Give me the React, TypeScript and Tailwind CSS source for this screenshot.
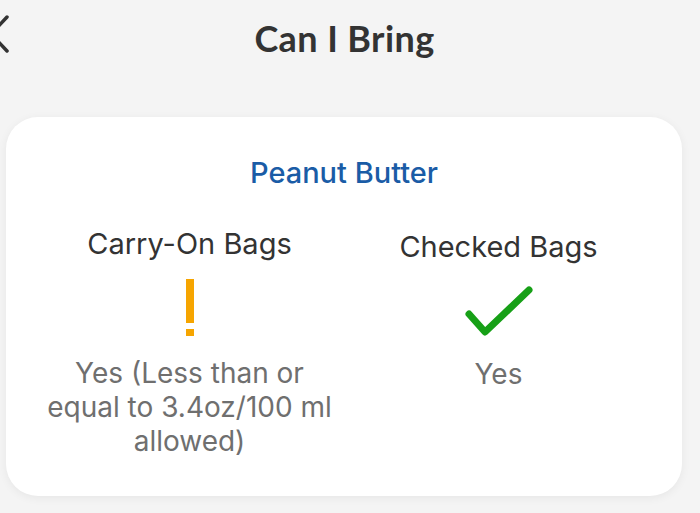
export default function App() {
  return (
    <div
      className="w-[700px] h-[513px] overflow-hidden bg-[#f4f4f4] text-[#333333]"
      style={{ fontFamily: "Inter, Roboto, 'Liberation Sans', sans-serif" }}
    >
      <header className="relative h-[76px] flex items-center justify-center pr-[11px]">
        <svg
          className="absolute left-[-12px] top-[15px]"
          width="22"
          height="38"
          viewBox="0 0 22 38"
          fill="none"
        >
          <path d="M19 2 L3 19 L19 36" stroke="#333" strokeWidth="3.5" strokeLinecap="round" strokeLinejoin="round" />
        </svg>
        <h1
          className="text-[36px] font-bold tracking-[0.4px] -mt-[1px]"
          style={{ fontFamily: "Lato, 'Open Sans', sans-serif" }}
        >
          Can I Bring
        </h1>
      </header>

      <div className="ml-[6px] mt-[41px] w-[676px] h-[379px] bg-white rounded-[32px] shadow-[0_2px_10px_rgba(0,0,0,0.06)] px-[29px] pt-[38px]">
        <h2 className="text-center text-[29px] font-medium text-[#1a5ca6] leading-[36px]">
          Peanut Butter
        </h2>
        <div className="grid grid-cols-2 mt-[35px]">
          <div className="flex flex-col items-center">
            <h3 className="text-[29px] leading-[36px]">Carry-On Bags</h3>
            <svg className="mt-[17px]" width="10" height="58" viewBox="0 0 10 58">
              <rect x="1" y="0" width="8" height="44" fill="#f6a500" />
              <rect x="1" y="50" width="8" height="7" fill="#f6a500" />
            </svg>
            <p className="mt-[19px] text-[28px] leading-[34px] text-[#6f6f6f] text-center w-[320px]">
              Yes (Less than or
              <br />
              equal to 3.4oz/100 ml
              <br />
              allowed)
            </p>
          </div>
          <div className="flex flex-col items-center">
            <h3 className="text-[29px] leading-[36px] mt-[3px]">Checked Bags</h3>
            <svg className="mt-[20px]" width="74" height="56" viewBox="0 0 74 56">
              <path d="M7 29 L23 47 L67 5" stroke="#17a017" strokeWidth="7" fill="none" strokeLinecap="round" strokeLinejoin="round" />
            </svg>
            <p className="mt-[16px] text-[28px] leading-[34px] text-[#6f6f6f]">Yes</p>
          </div>
        </div>
      </div>
    </div>
  );
}
